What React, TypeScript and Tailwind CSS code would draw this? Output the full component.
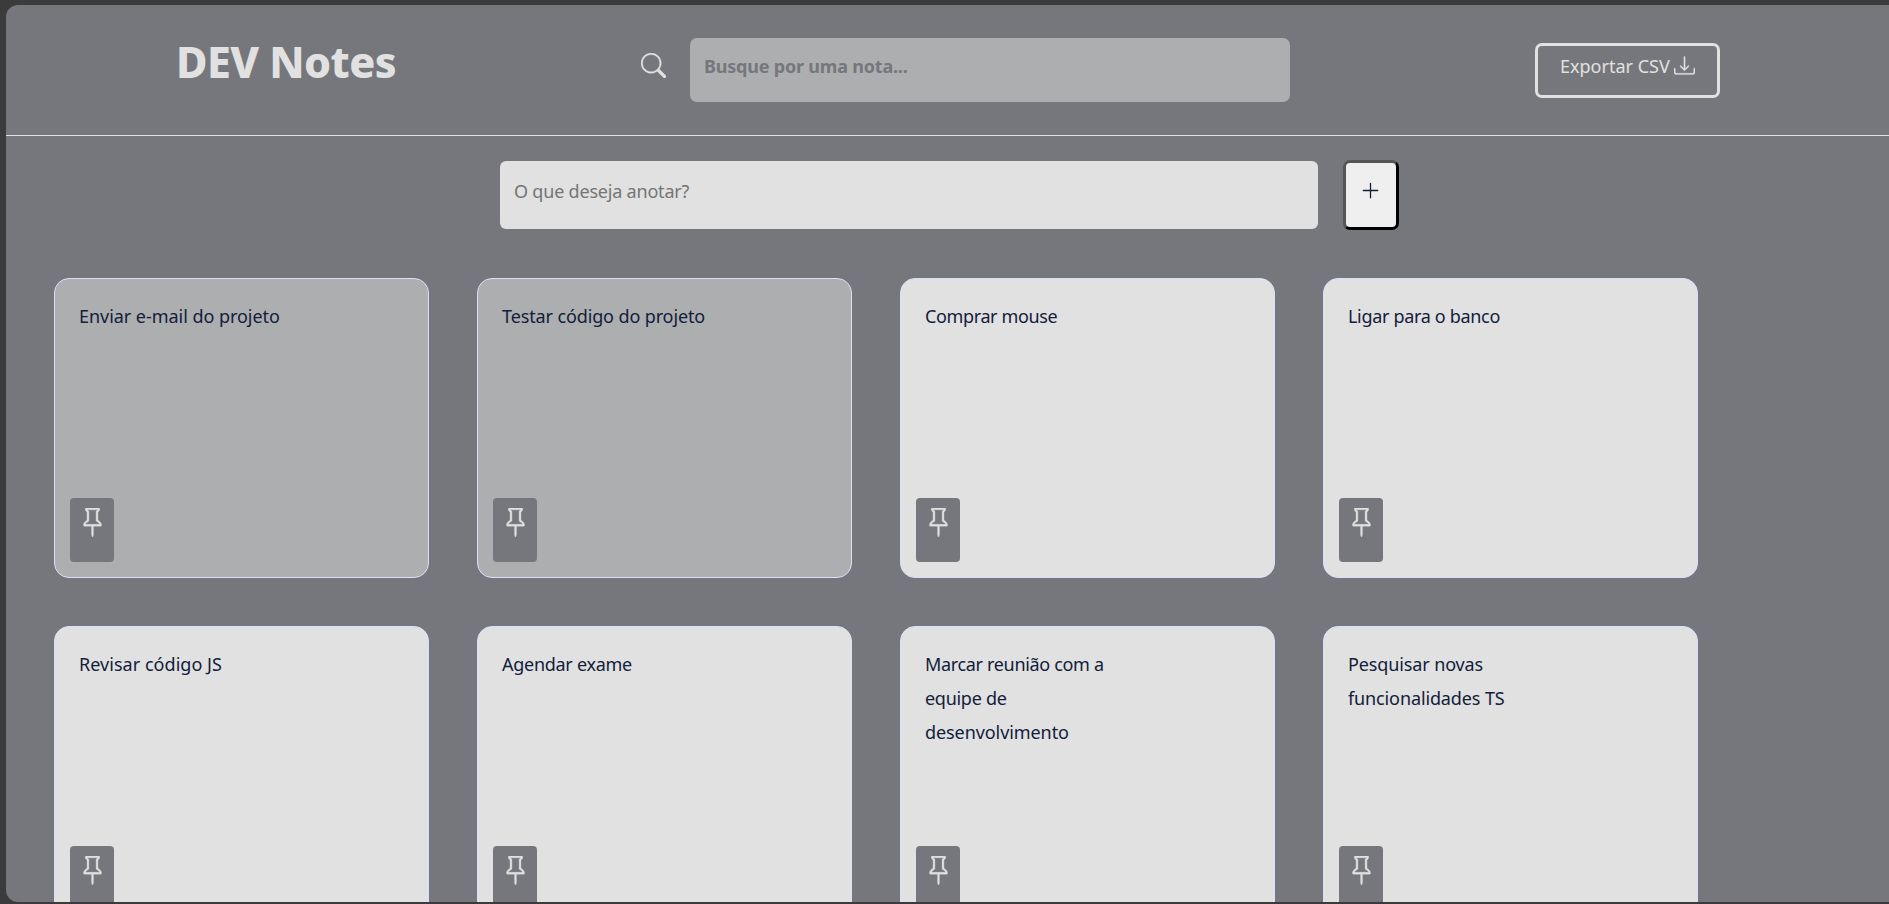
import { BsDownload, BsPin, BsPlusLg, BsSearch } from "react-icons/bs";

type Line = { text: string; tracking: string };
type Note = { lines: Line[]; fixed?: boolean };

const notes: Note[] = [
  { lines: [{ text: "Enviar e-mail do projeto", tracking: "tracking-[-0.04px]" }], fixed: true },
  { lines: [{ text: "Testar código do projeto", tracking: "tracking-[-0.12px]" }], fixed: true },
  { lines: [{ text: "Comprar mouse", tracking: "tracking-[-0.37px]" }] },
  { lines: [{ text: "Ligar para o banco", tracking: "tracking-[-0.32px]" }] },
  { lines: [{ text: "Revisar código JS", tracking: "tracking-[0.04px]" }] },
  { lines: [{ text: "Agendar exame", tracking: "tracking-[-0.28px]" }] },
  {
    lines: [
      { text: "Marcar reunião com a", tracking: "tracking-[-0.33px]" },
      { text: "equipe de", tracking: "tracking-[-0.28px]" },
      { text: "desenvolvimento", tracking: "tracking-[-0.08px]" },
    ],
  },
  {
    lines: [
      { text: "Pesquisar novas", tracking: "tracking-[-0.12px]" },
      { text: "funcionalidades TS", tracking: "tracking-[-0.12px]" },
    ],
  },
];

function NoteCard({ lines, fixed }: Note) {
  return (
    <article
      className={`flex h-[300px] flex-col justify-between rounded-[15px] border border-[#dadffb] pt-5 pr-5 pb-[15px] pl-[15px] ${
        fixed ? "bg-[#adaeb0]" : "bg-[#e1e1e1]"
      }`}
    >
      <p className="pl-[9px] text-[18px] leading-[34px] whitespace-nowrap text-[#12203a]">
        {lines.map((line) => (
          <span key={line.text} className={`block ${line.tracking}`}>
            {line.text}
          </span>
        ))}
      </p>
      <button className="flex h-16 w-11 items-start justify-center rounded-[4px] bg-[#76777c] pt-[10px] text-[#e1e1e1]">
        <BsPin size={29} strokeWidth={0.2} />
      </button>
    </article>
  );
}

export default function App() {
  return (
    <div className="h-[904px] w-[1889px] overflow-hidden bg-[#3b3b3b] pt-[5px] pb-[2px] pl-[6px] font-['Noto_Sans',sans-serif]">
      <div className="flex h-full flex-col overflow-hidden rounded-l-[12px] bg-[#76777c]">
        <header className="flex h-[131px] shrink-0 items-start border-b border-[#e1e1e1] pl-[170px]">
          <h1 className="mt-[27px] w-[465px] text-[43px] leading-[60px] font-extrabold tracking-[-0.55px] text-[#e1e1e1]">
            DEV Notes
          </h1>
          <BsSearch size={25} strokeWidth={0.2} className="mt-12 shrink-0 text-[#e1e1e1]" />
          <input
            className="mt-[33px] ml-6 h-16 w-[600px] rounded-[7px] bg-[#adaeb0] pb-[8px] pl-[14px] text-[18px] font-bold tracking-[-0.2px] placeholder:text-[#76777c]"
            placeholder="Busque por uma nota..."
          />
          <button className="mt-[38px] ml-[245px] flex h-[55px] w-[185px] items-start rounded-[7px] border-[3px] border-[#e1e1e1] pl-[22px] text-[18px] leading-[24px] text-[#e1e1e1]">
            <span className="mt-2 w-[114px] shrink-0 text-left whitespace-nowrap">Exportar CSV</span>
            <BsDownload size={21} strokeWidth={0.2} className="mt-[9px] shrink-0" />
          </button>
        </header>

        <section className="flex shrink-0 items-start pt-6 pl-[494px]">
          <input
            className="mt-px h-[68px] w-[818px] rounded-[6px] bg-[#e1e1e1] pb-[8px] pl-[14px] text-[18px] tracking-[-0.2px] placeholder:text-[#757575]"
            placeholder="O que deseja anotar?"
          />
          <button className="ml-[25px] flex h-[70px] w-14 items-start justify-center rounded-[7px] border-[3px] border-t-[#555555] border-r-black border-b-black border-l-[#555555] bg-[#efefef] pt-[17px] pr-px text-[#12203a]">
            <BsPlusLg size={21} />
          </button>
        </section>

        <main className="mt-12 grid shrink-0 grid-cols-[repeat(4,375px)] gap-12 pl-12">
          {notes.map((note) => (
            <NoteCard key={note.lines[0].text} {...note} />
          ))}
        </main>
      </div>
    </div>
  );
}
